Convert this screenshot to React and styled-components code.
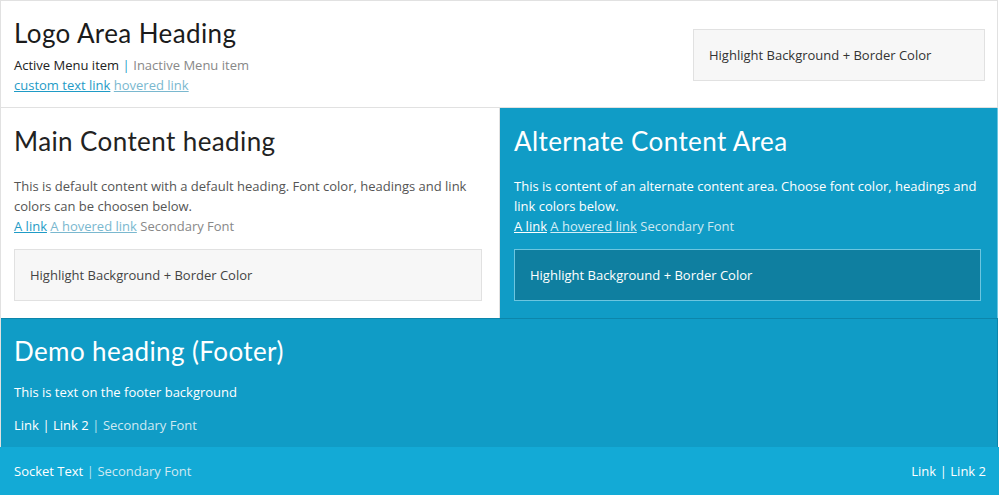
import React from 'react';
import styled, { createGlobalStyle } from 'styled-components';

const GlobalStyle = createGlobalStyle`
  body {
    margin: 0;
    background: #fff;
    font-family: "Open Sans", "Liberation Sans", sans-serif;
  }
`;

const Page = styled.div`
  width: 998px;
  border-left: 1px solid #e1e1e1;
  border-top: 1px solid #e1e1e1;
  box-sizing: border-box;
`;

const Header = styled.header`
  height: 107px;
  display: flex;
  justify-content: space-between;
  align-items: flex-start;
  padding: 0 12px 0 13px;
  border-bottom: 1px solid #e1e1e1;
  border-right: 1px solid #e1e1e1;
  box-sizing: border-box;
`;

const Heading = styled.h1`
  font-family: "Lato", "Liberation Sans", sans-serif;
  font-weight: 400;
  font-size: ${p => p.$size || 26}px;
  line-height: 1;
  margin: ${p => p.$margin || '0'};
  color: ${p => p.$color || '#1b1b1b'};
  letter-spacing: 0.4px;
`;

const Text = styled.div`
  font-size: 13px;
  line-height: 20px;
  color: ${p => p.$color || '#555'};
  margin: ${p => p.$margin || '0'};
`;

const Link = styled.a`
  color: ${p => p.$color};
  text-decoration: underline;
`;

const Sep = styled.span`
  color: ${p => p.$color};
  margin: 0 3.5px;
`;

const Muted = styled.span`
  color: ${p => p.$color};
`;

const Highlight = styled.div`
  background: ${p => p.$bg || '#f7f7f7'};
  border: 1px solid ${p => p.$border || '#e1e1e1'};
  color: ${p => p.$color || '#444'};
  font-size: 13px;
  line-height: 20px;
  padding: 15px;
  width: ${p => p.$width || 'auto'};
  margin: ${p => p.$margin || '0'};
  box-sizing: border-box;
`;

const Row = styled.div`
  display: flex;
  height: 210px;
`;

const Column = styled.section`
  flex: 0 0 ${p => p.$width}px;
  background: ${p => p.$bg};
  padding: 20px ${p => p.$padR}px 0 ${p => p.$padL}px;
  box-sizing: border-box;
  border-right: 1px solid ${p => p.$edge || 'transparent'};
`;

const Footer = styled.footer`
  background: #109cc6;
  border-top: 1px solid #0c86ab;
  border-right: 1px solid #0c86ab;
  height: 129px;
  padding: 19px 13px 0;
  box-sizing: border-box;
`;

const Socket = styled.div`
  background: #13aad6;
  height: 48px;
  margin-left: -1px;
  width: 999px;
  padding: 0 13px 0 14px;
  display: flex;
  align-items: center;
  justify-content: space-between;
  box-sizing: border-box;
  font-size: 13px;
  color: #fff;
`;

export default function App() {
  return (
    <>
      <GlobalStyle />
      <Page>
        <Header>
          <div>
            <Heading $margin="19px 0 0">Logo Area Heading</Heading>
            <Text $color="#222" $margin="9px 0 0">
              Active Menu item<Sep $color="#1f9bc6">|</Sep><Muted $color="#888">Inactive Menu item</Muted>
            </Text>
            <Text $margin="0">
              <Link $color="#1f9bc6" href="#">custom text link</Link>{' '}
              <Link $color="#7ab8cf" href="#">hovered link</Link>
            </Text>
          </div>
          <Highlight $width="292px" $margin="28px 0 0" $color="#333">
            Highlight Background + Border Color
          </Highlight>
        </Header>
        <Row>
          <Column $width={499} $bg="#fff" $padL={13} $padR={17} $edge="#e1e1e1">
            <Heading $color="#222">Main Content heading</Heading>
            <Text $margin="22px 0 0">
              This is default content with a default heading. Font color, headings and link colors can be choosen below.
            </Text>
            <Text>
              <Link $color="#1f9bc6" href="#">A link</Link>{' '}
              <Link $color="#7ab8cf" href="#">A hovered link</Link>{' '}
              <Muted $color="#888">Secondary Font</Muted>
            </Text>
            <Highlight $margin="13px 0 0">Highlight Background + Border Color</Highlight>
          </Column>
          <Column $width={498} $bg="#109cc6" $padL={14} $padR={16} $edge="#6cc6e0">
            <Heading $color="#fff">Alternate Content Area</Heading>
            <Text $color="#fff" $margin="22px 0 0">
              This is content of an alternate content area. Choose font color, headings and link colors below.
            </Text>
            <Text>
              <Link $color="#fff" href="#">A link</Link>{' '}
              <Link $color="#d4eef7" href="#">A hovered link</Link>{' '}
              <Muted $color="#cfe9f2">Secondary Font</Muted>
            </Text>
            <Highlight $bg="#0f7fa0" $border="#6cc6e0" $color="#fff" $margin="13px 0 0">
              Highlight Background + Border Color
            </Highlight>
          </Column>
        </Row>
        <Footer>
          <Heading $color="#fff">Demo heading (Footer)</Heading>
          <Text $color="#fff" $margin="18px 0 0">This is text on the footer background</Text>
          <Text $color="#fff" $margin="13px 0 0">
            Link<Sep $color="#fff">|</Sep>Link 2<Sep $color="#b9e2f0">|</Sep><Muted $color="#cfe9f2">Secondary Font</Muted>
          </Text>
        </Footer>
        <Socket>
          <span>
            Socket Text<Sep $color="#b9e2f0">|</Sep><Muted $color="#cfe9f2">Secondary Font</Muted>
          </span>
          <span>
            Link<Sep $color="#fff">|</Sep>Link 2
          </span>
        </Socket>
      </Page>
    </>
  );
}
